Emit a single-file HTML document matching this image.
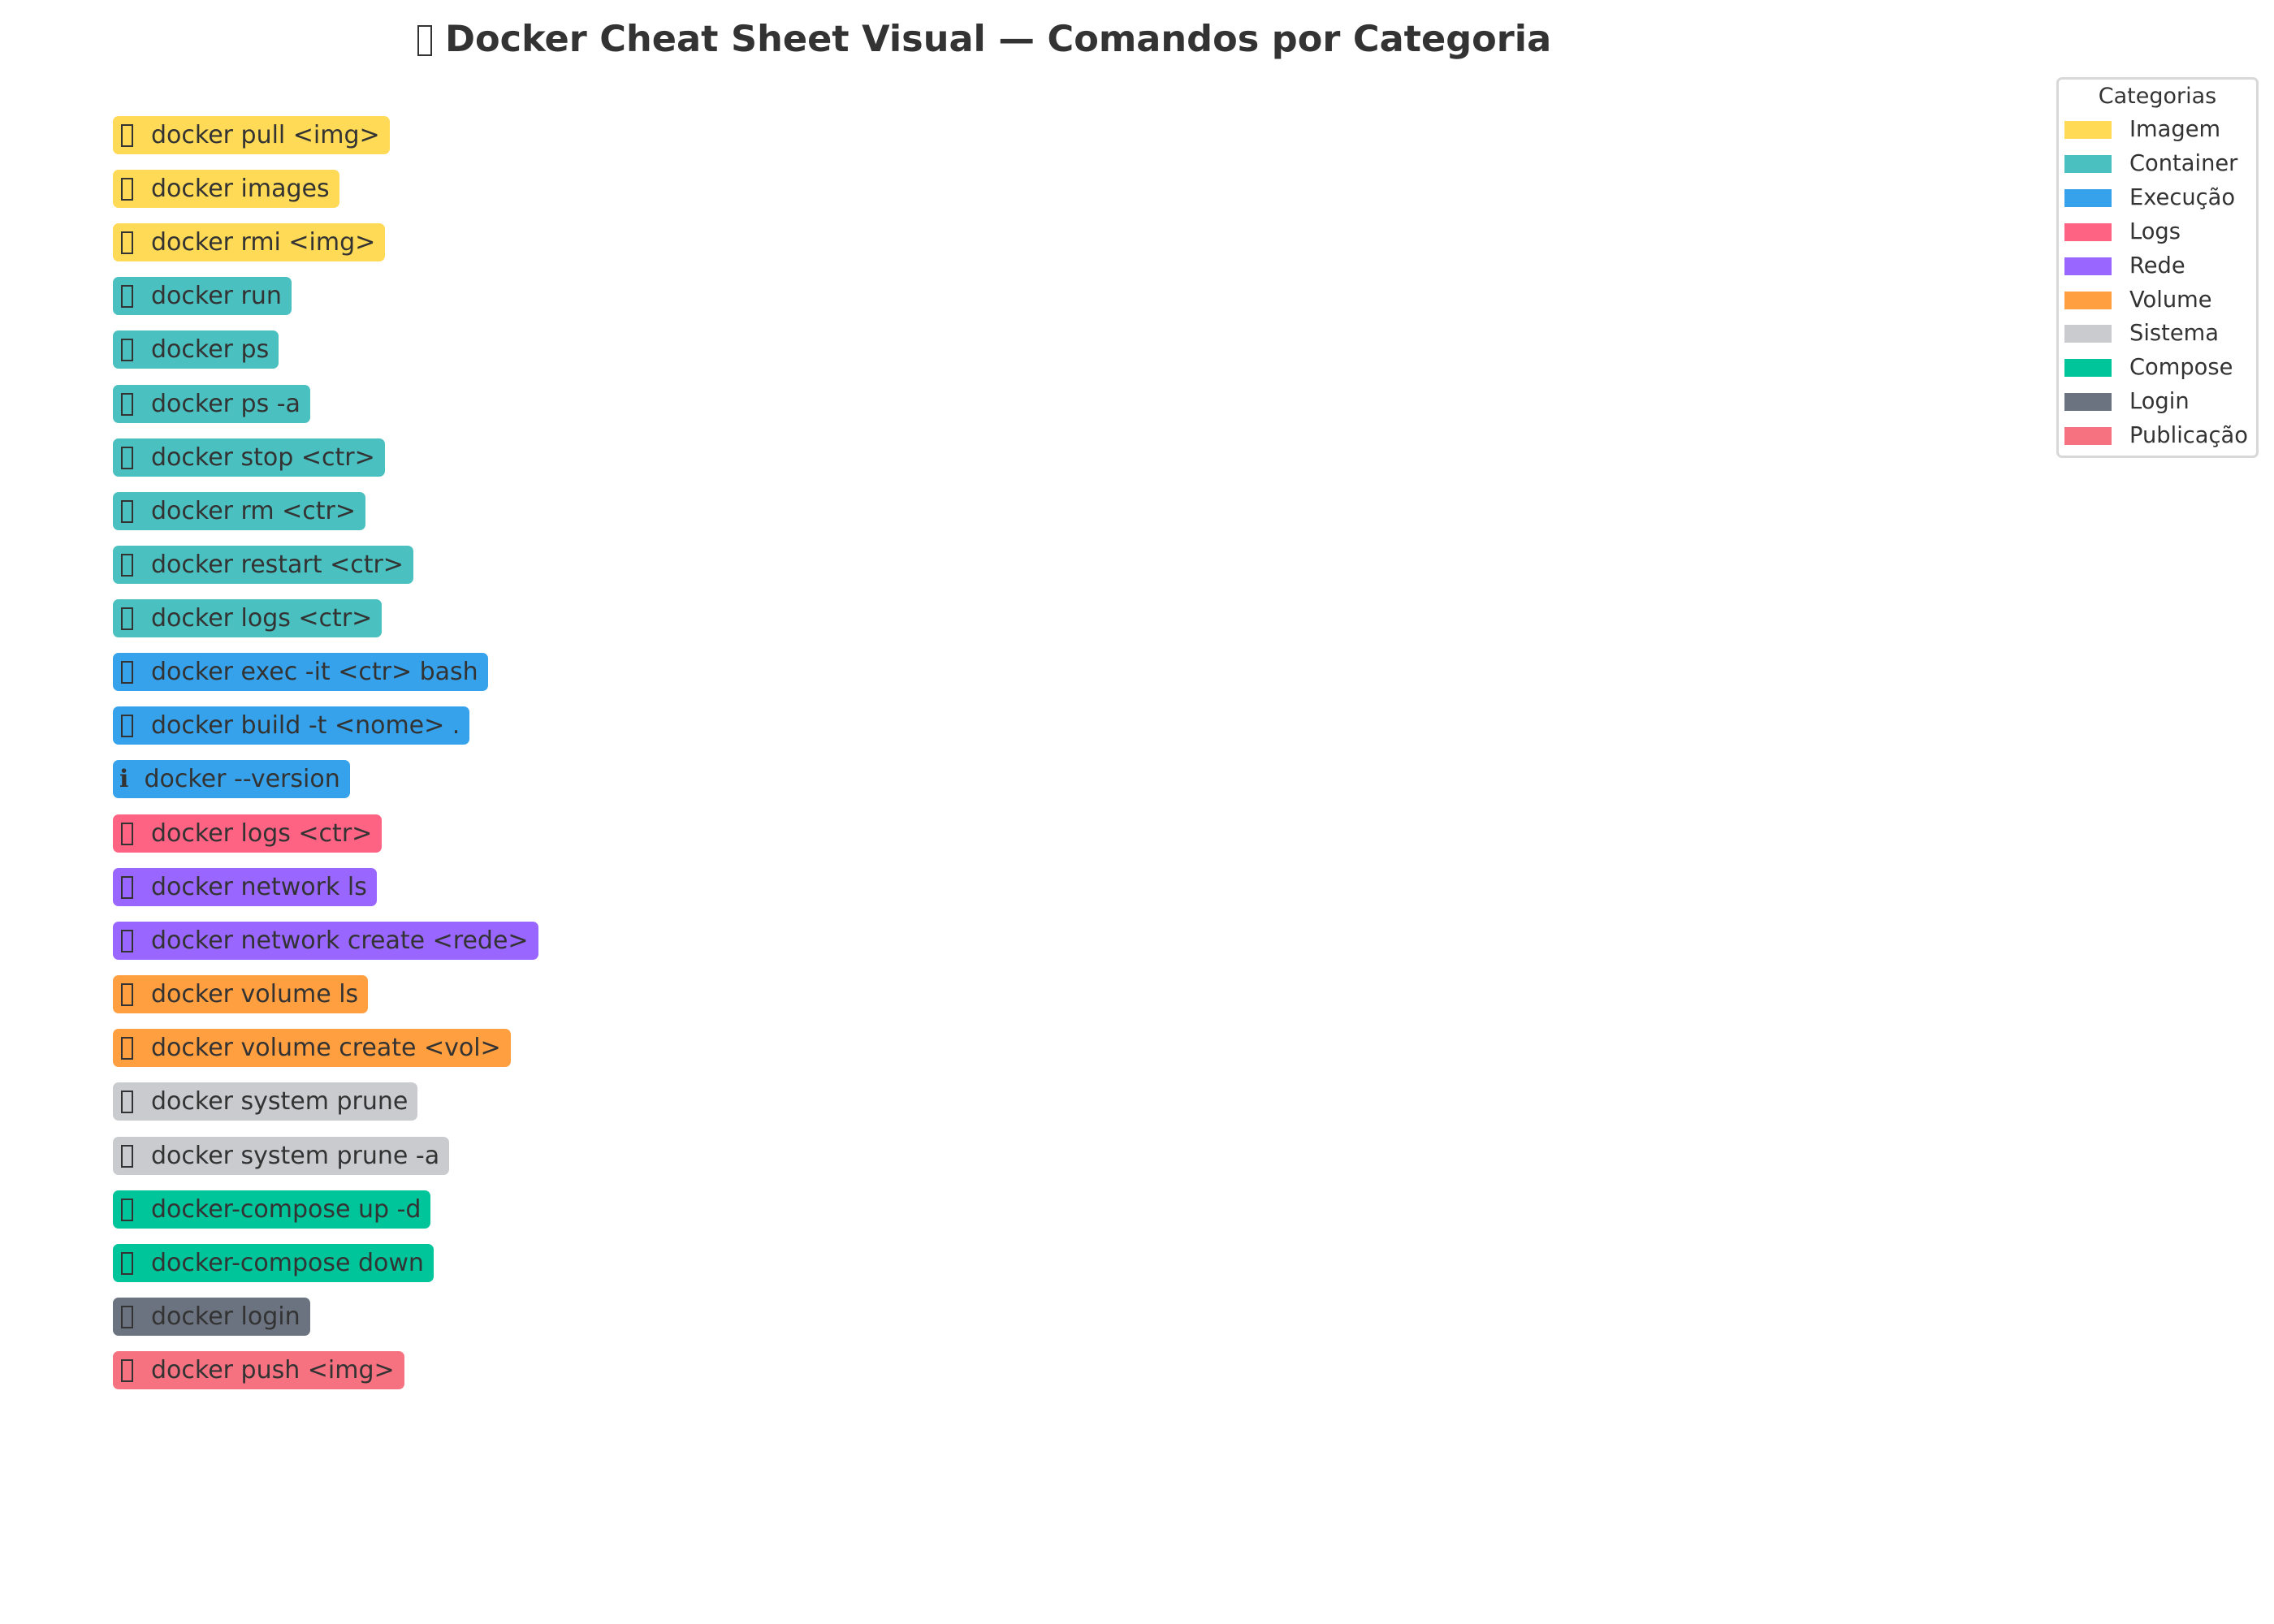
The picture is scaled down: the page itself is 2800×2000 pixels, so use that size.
<!DOCTYPE html>
<html><head><meta charset="utf-8"><style>
html,body{margin:0;padding:0;background:#fff;}
body{width:2800px;height:2000px;position:relative;overflow:hidden;font-family:"DejaVu Sans","Liberation Sans",sans-serif;color:#333;}
.title{position:absolute;left:514px;top:20px;font-size:44.6px;font-weight:bold;white-space:pre;line-height:56px;}
.title .tf{display:inline-block;width:18px;height:38px;border:2px solid #333;box-sizing:border-box;vertical-align:-6px;margin-right:16px;}
.row{position:absolute;left:139px;height:47px;border-radius:7px;padding:0 12px 0 10px;font-size:30px;line-height:47px;white-space:pre;box-sizing:border-box;}
.tf{display:inline-block;width:15px;height:28px;border:2px solid #333;box-sizing:border-box;vertical-align:-5px;margin-right:22px;}
.leg{position:absolute;left:2532px;top:95px;width:249px;height:469px;border:3px solid #d8d8d8;border-radius:7px;box-sizing:border-box;}
.lt{position:absolute;left:2532px;width:249px;top:103px;text-align:center;font-size:27px;}
.sw{position:absolute;left:2542px;width:58px;height:22px;}
.lb{position:absolute;left:2622px;font-size:27.3px;line-height:30px;}
</style></head><body>
<div class="title"><span class="tf"></span>Docker Cheat Sheet Visual — Comandos por Categoria</div>

<div class="row" style="top:143px;background:#FFDA56"><span class="tf"></span>docker pull &lt;img&gt;</div>
<div class="row" style="top:209px;background:#FFDA56"><span class="tf"></span>docker images</div>
<div class="row" style="top:275px;background:#FFDA56"><span class="tf"></span>docker rmi &lt;img&gt;</div>
<div class="row" style="top:341px;background:#4BC0C0"><span class="tf"></span>docker run</div>
<div class="row" style="top:407px;background:#4BC0C0"><span class="tf"></span>docker ps</div>
<div class="row" style="top:474px;background:#4BC0C0"><span class="tf"></span>docker ps -a</div>
<div class="row" style="top:540px;background:#4BC0C0"><span class="tf"></span>docker stop &lt;ctr&gt;</div>
<div class="row" style="top:606px;background:#4BC0C0"><span class="tf"></span>docker rm &lt;ctr&gt;</div>
<div class="row" style="top:672px;background:#4BC0C0"><span class="tf"></span>docker restart &lt;ctr&gt;</div>
<div class="row" style="top:738px;background:#4BC0C0"><span class="tf"></span>docker logs &lt;ctr&gt;</div>
<div class="row" style="top:804px;background:#36A2EB"><span class="tf"></span>docker exec -it &lt;ctr&gt; bash</div>
<div class="row" style="top:870px;background:#36A2EB"><span class="tf"></span>docker build -t &lt;nome&gt; .</div>
<div class="row" style="top:936px;background:#36A2EB;padding-left:8px">ℹ  docker --version</div>
<div class="row" style="top:1003px;background:#FF6384"><span class="tf"></span>docker logs &lt;ctr&gt;</div>
<div class="row" style="top:1069px;background:#9966FF"><span class="tf"></span>docker network ls</div>
<div class="row" style="top:1135px;background:#9966FF"><span class="tf"></span>docker network create &lt;rede&gt;</div>
<div class="row" style="top:1201px;background:#FF9F40"><span class="tf"></span>docker volume ls</div>
<div class="row" style="top:1267px;background:#FF9F40"><span class="tf"></span>docker volume create &lt;vol&gt;</div>
<div class="row" style="top:1333px;background:#C9CBCF"><span class="tf"></span>docker system prune</div>
<div class="row" style="top:1400px;background:#C9CBCF"><span class="tf"></span>docker system prune -a</div>
<div class="row" style="top:1466px;background:#00C49A"><span class="tf"></span>docker-compose up -d</div>
<div class="row" style="top:1532px;background:#00C49A"><span class="tf"></span>docker-compose down</div>
<div class="row" style="top:1598px;background:#6B7280"><span class="tf"></span>docker login</div>
<div class="row" style="top:1664px;background:#F67280"><span class="tf"></span>docker push &lt;img&gt;</div>

<div class="leg"></div>
<div class="lt">Categorias</div>
<div class="sw" style="top:149px;background:#FFDA56"></div><div class="lb" style="top:145px">Imagem</div>
<div class="sw" style="top:191px;background:#4BC0C0"></div><div class="lb" style="top:187px">Container</div>
<div class="sw" style="top:233px;background:#36A2EB"></div><div class="lb" style="top:229px">Execução</div>
<div class="sw" style="top:275px;background:#FF6384"></div><div class="lb" style="top:271px">Logs</div>
<div class="sw" style="top:317px;background:#9966FF"></div><div class="lb" style="top:313px">Rede</div>
<div class="sw" style="top:359px;background:#FF9F40"></div><div class="lb" style="top:355px">Volume</div>
<div class="sw" style="top:400px;background:#C9CBCF"></div><div class="lb" style="top:396px">Sistema</div>
<div class="sw" style="top:442px;background:#00C49A"></div><div class="lb" style="top:438px">Compose</div>
<div class="sw" style="top:484px;background:#6B7280"></div><div class="lb" style="top:480px">Login</div>
<div class="sw" style="top:526px;background:#F67280"></div><div class="lb" style="top:522px">Publicação</div>
</body></html>
